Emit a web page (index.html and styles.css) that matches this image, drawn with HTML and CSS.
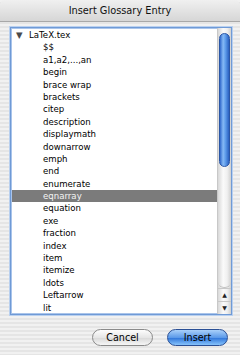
FILE: index.html
```html
<!DOCTYPE html>
<html lang="en">
<head>
    <meta charset="UTF-8">
    <title>Insert Glossary Entry</title>
    <link rel="stylesheet" href="styles.css">
</head>
<body>
    <div class="window">
        <div class="titlebar">Insert Glossary Entry</div>

        <div class="listbox">
            <div class="rows">
                <div class="row root"><span class="disclosure">&#9660;</span>LaTeX.tex</div>
                <div class="row">$$</div>
                <div class="row">a1,a2,...,an</div>
                <div class="row">begin</div>
                <div class="row">brace wrap</div>
                <div class="row">brackets</div>
                <div class="row">citep</div>
                <div class="row">description</div>
                <div class="row">displaymath</div>
                <div class="row">downarrow</div>
                <div class="row">emph</div>
                <div class="row">end</div>
                <div class="row">enumerate</div>
                <div class="row selected">eqnarray</div>
                <div class="row">equation</div>
                <div class="row">exe</div>
                <div class="row">fraction</div>
                <div class="row">index</div>
                <div class="row">item</div>
                <div class="row">itemize</div>
                <div class="row">ldots</div>
                <div class="row">Leftarrow</div>
                <div class="row">lit</div>
            </div>
            <div class="scrollbar">
                <div class="track">
                    <div class="thumb"></div>
                </div>
                <div class="arrow">&#9650;</div>
                <div class="arrow">&#9660;</div>
            </div>
        </div>

        <div class="buttons">
            <button class="btn">Cancel</button>
            <button class="btn default">Insert</button>
        </div>
    </div>
</body>
</html>
```

FILE: styles.css
```css
body {
    margin: 0;
    font-family: "DejaVu Sans", sans-serif;
    font-size: 8.6px;
    color: #000;
}
.window {
    width: 240px;
    height: 355px;
    display: flex;
    flex-direction: column;
    background: repeating-linear-gradient(to bottom, #f1f1f1 0, #f1f1f1 2px, #e5e5e5 2px, #e5e5e5 4px);
    overflow: hidden;
}
.titlebar {
    height: 21px;
    line-height: 22px;
    text-align: center;
    font-size: 9.8px;
    color: #111;
    border-bottom: 1px solid #a8a8a8;
    border-radius: 5px 5px 0 0;
    background: linear-gradient(to bottom, #f0f0f0, #d6d6d6);
}
.listbox {
    margin: 5px 8px 0 10px;
    height: 286px;
    display: flex;
    background: #fff;
    border: 1px solid #6f9ad6;
    box-shadow: 0 0 0 1px #b9d0ef, inset 0 0 0 1px #a9c4ea;
}
.rows {
    flex: 1;
    padding-top: 1px;
    padding-left: 1px;
}
.row {
    height: 12.4px;
    line-height: 12.4px;
    padding-left: 31px;
    white-space: nowrap;
}
.row.root {
    padding-left: 4px;
}
.disclosure {
    display: inline-block;
    width: 13px;
    font-size: 8.5px;
    color: #4a4a4a;
}
.row.selected {
    background: #7b7b7b;
    color: #f4f4f4;
}
.scrollbar {
    width: 13px;
    display: flex;
    flex-direction: column;
    border-left: 1px solid #c8c8c8;
    background: linear-gradient(to right, #d8d8d8, #fafafa 40%, #f0f0f0 70%, #d0d0d0);
}
.track {
    flex: 1;
    padding: 5px 1px 0 1px;
    border-bottom: 1px solid #c4c4c4;
    border-radius: 0 0 6px 6px;
}
.thumb {
    height: 132px;
    border-radius: 6px;
    border: 1px solid #2a56a6;
    background: linear-gradient(to right, #3169cc, #86baf5 35%, #5f9deb 60%, #2a60c0);
}
.arrow {
    height: 12px;
    line-height: 12px;
    text-align: center;
    font-size: 6px;
    color: #222;
    border-top: 1px solid #c8c8c8;
}
.buttons {
    display: flex;
    justify-content: flex-end;
    gap: 14px;
    margin-top: 14px;
    padding-right: 12px;
}
.btn {
    height: 17px;
    width: 61px;
    padding: 0;
    border-radius: 9px;
    font-family: "DejaVu Sans", sans-serif;
    font-size: 9.6px;
    color: #000;
    border: 1px solid #8a8a8a;
    background: linear-gradient(to bottom, #fdfdfd, #e6e6e6 50%, #d8d8d8 52%, #f6f6f6);
}
.btn.default {
    border-color: #2a4f95;
    background: linear-gradient(to bottom, #a9d0fa, #5c9ae9 50%, #2e74d9 52%, #86c3fb);
}
```
